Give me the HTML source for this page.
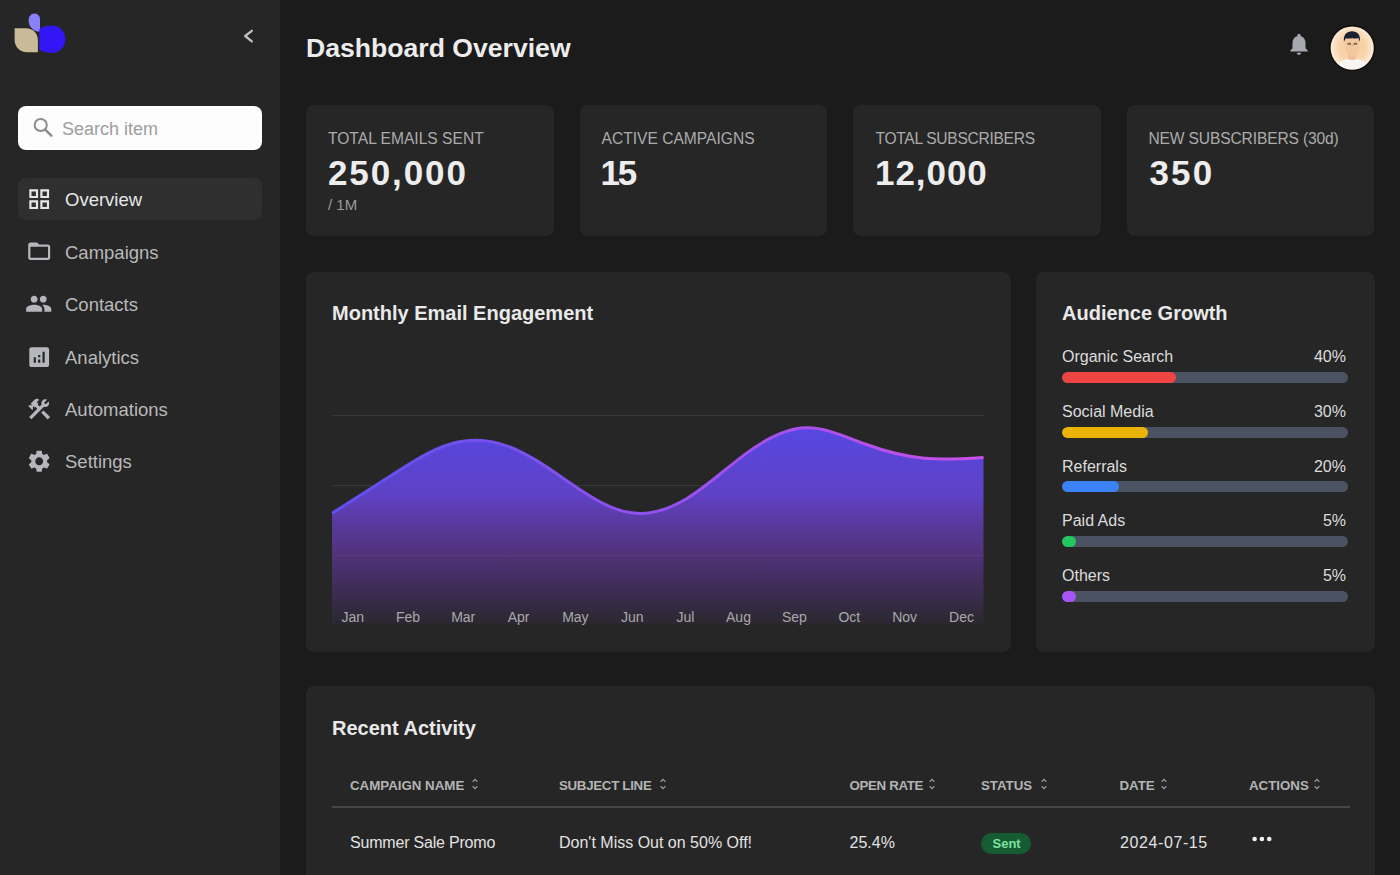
<!DOCTYPE html>
<html><head><meta charset="utf-8">
<style>
*{margin:0;padding:0;box-sizing:border-box}
html,body{width:1400px;height:875px;overflow:hidden;background:#1b1b1b;font-family:"Liberation Sans",sans-serif}
.abs{position:absolute}
.t{position:absolute;white-space:nowrap;line-height:1}
#side{position:absolute;left:0;top:0;width:280px;height:875px;background:#262626}
.card{position:absolute;background:#262626;border-radius:8px}
.search{position:absolute;left:18px;top:105.5px;width:244px;height:44.5px;background:#fdfdfd;border-radius:8px}
.nav-act{position:absolute;left:18px;top:177.5px;width:244px;height:42px;background:#2f2f2f;border-radius:8px}
.nav{font-size:18.5px;color:#b9b9b9}
.ico{position:absolute;fill:#b5b7bd}
.lbl{font-size:15.6px;color:#ababab;letter-spacing:0}
.val{font-size:35px;font-weight:700;color:#ededed}
.h2{font-size:20px;font-weight:700;color:#e9e9e9}
.ag{font-size:16px;color:#dcdcdc}
.track{position:absolute;left:1062px;width:286px;height:11px;border-radius:6px;background:#4b5261;overflow:hidden}
.track i{position:absolute;left:0;top:0;bottom:0;border-radius:6px}
.mon{font-size:14px;color:#a9a9a9;text-align:center;width:50px}
.th{font-size:13.3px;font-weight:700;color:#b4b4b4}
.td{font-size:16px;color:#e2e2e2}
.sort{position:absolute;fill:#9c9c9c}
</style></head><body>
<div id="side"></div>
<!-- logo -->
<svg class="abs" style="left:0;top:0" width="80" height="70" viewBox="0 0 80 70">
  <path d="M34.5,13.6 C31,13.6 28.6,16.5 28.6,20.5 C28.6,26.5 33,31.7 40,31.7 L40,19.5 C40,16 37.8,13.6 34.5,13.6Z" fill="#8a80f8"/>
  <path d="M14.6,28.3 L26,28.3 C33,28.3 37.9,33.5 37.9,40.5 L37.9,52.3 L27,52.3 C20,52.3 14.6,47 14.6,40Z" fill="#c9bb98"/>
  <path d="M39.3,29.5 C42,26.8 46.5,25.6 51.5,25.6 C59.5,25.6 65.3,31.5 65.3,39.3 C65.3,47 59.5,53 51.5,53 C46.5,53 42,51.8 39.3,49.5Z" fill="#3216f6"/>
</svg>
<svg class="abs" style="left:240px;top:26px" width="20" height="20" viewBox="0 0 20 20"><path d="M11.8,4.8 L5.2,10 L11.8,15.4" fill="none" stroke="#c0c0c0" stroke-width="2.3" stroke-linecap="round" stroke-linejoin="round"/></svg>

<div class="search"></div>
<svg class="abs" style="left:30px;top:114px" width="26" height="26" viewBox="30 114 26 26"><circle cx="40.7" cy="125" r="6.1" fill="none" stroke="#8c8c8c" stroke-width="2"/><path d="M45.3,129.6 L51.3,135.6" stroke="#8c8c8c" stroke-width="2.5" stroke-linecap="round"/></svg>
<div class="t" style="left:62px;top:119.7px;font-size:18px;color:#9d9d9d">Search item</div>

<div class="nav-act"></div>
<svg class="ico" style="left:25.8px;top:185.6px" width="26.4" height="26.4" viewBox="0 0 24 24"><path fill="#e6e6e6" d="M3 3v8h8V3H3zm6 6H5V5h4v4zm-6 4v8h8v-8H3zm6 6H5v-4h4v4zm4-16v8h8V3h-8zm6 6h-4V5h4v4zm-6 4v8h8v-8h-8zm6 6h-4v-4h4v4z"/></svg>
<div class="t nav" style="left:65px;top:191px;color:#e6e6e6">Overview</div>
<svg class="ico" style="left:25.8px;top:238.2px" width="26.4" height="26.4" viewBox="0 0 24 24"><path d="M20 6h-8l-2-2H4c-1.1 0-1.99.9-1.99 2L2 18c0 1.1.9 2 2 2h16c1.1 0 2-.9 2-2V8c0-1.1-.9-2-2-2zm0 12H4V8h16v10z"/></svg>
<div class="t nav" style="left:65px;top:243.5px">Campaigns</div>
<svg class="ico" style="left:25.4px;top:289.8px" width="27.4" height="27.4" viewBox="0 0 24 24"><path d="M16 11c1.66 0 2.99-1.34 2.99-3S17.66 5 16 5c-1.66 0-3 1.34-3 3s1.34 3 3 3zm-8 0c1.66 0 2.99-1.34 2.99-3S9.66 5 8 5C6.34 5 5 6.34 5 8s1.34 3 3 3zm0 2c-2.33 0-7 1.17-7 3.5V19h14v-2.5c0-2.33-4.67-3.5-7-3.5zm8 0c-.29 0-.62.02-.97.05 1.16.84 1.97 1.97 1.97 3.45V19h6v-2.5c0-2.33-4.67-3.5-7-3.5z"/></svg>
<div class="t nav" style="left:65px;top:296px">Contacts</div>
<svg class="ico" style="left:25.8px;top:343.5px" width="26.4" height="26.4" viewBox="0 0 24 24"><path d="M19 3H5c-1.1 0-2 .9-2 2v14c0 1.1.9 2 2 2h14c1.1 0 2-.9 2-2V5c0-1.1-.9-2-2-2zM9 17H7v-5h2v5zm4 0h-2v-3h2v3zm0-5h-2v-2h2v2zm4 5h-2V7h2v10z"/></svg>
<div class="t nav" style="left:65px;top:348.5px">Analytics</div>
<svg class="ico" style="left:25.8px;top:395.7px" width="26.4" height="26.4" viewBox="0 0 24 24"><path d="M13.78 15.3l6 6 2.11-2.16-6-6zM17.5 10c1.93 0 3.5-1.57 3.5-3.5 0-.58-.16-1.12-.41-1.6l-2.7 2.7-1.49-1.49 2.7-2.7c-.48-.25-1.020-.41-1.6-.41C15.57 3 14 4.57 14 6.5c0 .41.08.8.21 1.16l-1.85 1.85-1.78-1.78.71-.71-1.41-1.41L12 3.49c-1.17-1.17-3.07-1.17-4.240 0L4.22 7.03l1.41 1.41H2.81l-.71.71 3.54 3.54.71-.71V9.15l1.41 1.41.71-.71 1.78 1.78-7.41 7.41 2.12 2.12L16.34 9.79c.36.13.75.21 1.16.21z"/></svg>
<div class="t nav" style="left:65px;top:401px">Automations</div>
<svg class="ico" style="left:25.8px;top:447.9px" width="26.4" height="26.4" viewBox="0 0 24 24"><path d="M19.14 12.94c.04-.3.06-.61.06-.94 0-.32-.02-.64-.07-.94l2.030-1.58c.18-.14.23-.41.12-.61l-1.92-3.32c-.12-.22-.37-.29-.59-.22l-2.39.96c-.5-.38-1.03-.7-1.62-.94l-.36-2.54c-.04-.24-.24-.41-.48-.41h-3.84c-.24 0-.43.17-.47.41l-.36 2.54c-.59.24-1.13.57-1.62.94l-2.39-.96c-.22-.08-.47 0-.59.22L2.74 8.87c-.12.21-.08.47.12.61l2.03 1.58c-.05.3-.09.63-.09.94s.02.64.07.94l-2.03 1.58c-.18.14-.23.41-.12.61l1.92 3.32c.12.22.37.29.59.22l2.39-.96c.5.38 1.03.7 1.62.94l.36 2.54c.05.24.24.41.48.41h3.84c.24 0 .44-.17.47-.41l.36-2.54c.59-.24 1.13-.56 1.62-.94l2.39.96c.22.08.47 0 .59-.22l1.92-3.32c.12-.22.07-.47-.12-.61l-2.01-1.58zM12 15.6c-1.98 0-3.6-1.62-3.6-3.6s1.62-3.6 3.6-3.6 3.6 1.62 3.6 3.6-1.62 3.6-3.6 3.6z"/></svg>
<div class="t nav" style="left:65px;top:453.2px">Settings</div>

<!-- header -->
<div class="t" style="left:306px;top:34.6px;font-size:26.6px;font-weight:700;color:#ececec">Dashboard Overview</div>
<svg class="abs" style="left:1286.3px;top:31.4px" width="26" height="26" viewBox="0 0 24 24"><path fill="#a6a9b0" d="M12 22c1.1 0 2-.9 2-2h-4c0 1.1.89 2 2 2zm6-6v-5c0-3.07-1.64-5.64-4.5-6.32V4c0-.83-.67-1.5-1.5-1.5s-1.5.67-1.5 1.5v.68C7.63 5.36 6 7.92 6 11v5l-2 2v1h16v-1l-2-2z"/></svg>
<svg class="abs" style="left:1328px;top:24px" width="48" height="48" viewBox="0 0 48 48">
  <defs>
    <radialGradient id="av" cx="50%" cy="48%" r="52%"><stop offset="0" stop-color="#f6c99c"/><stop offset="0.6" stop-color="#f8d4ac"/><stop offset="1" stop-color="#fdeedb"/></radialGradient>
    <clipPath id="avc"><circle cx="24.2" cy="24" r="21.6"/></clipPath>
  </defs>
  <circle cx="24.2" cy="24" r="23" fill="#0d0d0d"/>
  <circle cx="24.2" cy="24" r="21.6" fill="url(#av)"/>
  <g clip-path="url(#avc)">
    <path d="M7,48 C8,39 15,34.5 24.2,34.5 C33.4,34.5 40.5,39 41.5,48Z" fill="#f7f6f2"/>
    <path d="M20.3,27 L28.1,27 L28.5,35 C26.5,36.5 22,36.5 20,35Z" fill="#f0c29b"/>
    <path d="M17,18 C17,27 20,31.5 24.2,31.5 C28.4,31.5 31.4,27 31.4,18 C31.4,14.5 28.5,12 24.2,12 C19.9,12 17,14.5 17,18Z" fill="#f3c8a0"/>
    <path d="M15.9,17.8 C15.3,10.5 18.8,7.2 24,7.2 C29.4,7.2 32.6,10.5 32,17.8 C31.3,16.4 31,15.4 30.5,14.3 C28.5,14.6 25,14.4 24,14.2 C22,14.6 19.6,14.6 17.6,14.4 C17.2,15.4 16.6,16.5 15.9,17.8Z" fill="#1b2133"/>
    <rect x="19.4" y="18.8" width="3.6" height="2" rx="0.6" fill="#5e4536" opacity="0.75"/>
    <rect x="25.6" y="18.8" width="3.6" height="2" rx="0.6" fill="#5e4536" opacity="0.75"/>
    <path d="M23,21 L25.5,21" stroke="#8a6a55" stroke-width="0.6" opacity="0.6"/>
  </g>
</svg>

<!-- stat cards -->
<div class="card" style="left:306px;top:105px;width:247.5px;height:131px"></div>
<div class="card" style="left:579.5px;top:105px;width:247.5px;height:131px"></div>
<div class="card" style="left:853px;top:105px;width:247.5px;height:131px"></div>
<div class="card" style="left:1126.5px;top:105px;width:247.5px;height:131px"></div>
<div class="t lbl" style="left:328px;top:131px">TOTAL EMAILS SENT</div>
<div class="t lbl" style="left:601.5px;top:131px">ACTIVE CAMPAIGNS</div>
<div class="t lbl" style="left:875.5px;top:131px;letter-spacing:-0.3px">TOTAL SUBSCRIBERS</div>
<div class="t lbl" style="left:1148.5px;top:131px;letter-spacing:-0.15px">NEW SUBSCRIBERS (30d)</div>
<div class="t val" style="left:328px;top:155.4px;letter-spacing:1.9px">250,000</div>
<div class="t val" style="left:600.5px;top:155.4px;letter-spacing:-2.2px">15</div>
<div class="t val" style="left:875px;top:155.4px;letter-spacing:0.95px">12,000</div>
<div class="t val" style="left:1149.5px;top:155.4px;letter-spacing:2.1px">350</div>
<div class="t" style="left:328px;top:197.3px;font-size:15px;color:#9b9b9b">/ 1M</div>

<!-- chart card -->
<div class="card" style="left:306px;top:272px;width:704.5px;height:379.5px"></div>
<div class="t h2" style="left:332px;top:303px">Monthly Email Engagement</div>
<svg class="abs" style="left:0;top:0" width="1400" height="875" viewBox="0 0 1400 875">
  <defs>
    <linearGradient id="fillg" x1="0" y1="425" x2="0" y2="625" gradientUnits="userSpaceOnUse">
      <stop offset="0" stop-color="#5647e4" stop-opacity="1"/>
      <stop offset="0.35" stop-color="#6042c8" stop-opacity="0.98"/>
      <stop offset="0.65" stop-color="#6a3aac" stop-opacity="0.62"/>
      <stop offset="1" stop-color="#6a3aac" stop-opacity="0.06"/>
    </linearGradient>
    <linearGradient id="strk" x1="332" y1="0" x2="984" y2="0" gradientUnits="userSpaceOnUse">
      <stop offset="0" stop-color="#5d50ee"/>
      <stop offset="1" stop-color="#c850ea"/>
    </linearGradient>
  </defs>
  <line x1="332" y1="415.5" x2="984" y2="415.5" stroke="#ffffff" stroke-opacity="0.085" stroke-width="1"/>
  <line x1="332" y1="485.5" x2="984" y2="485.5" stroke="#ffffff" stroke-opacity="0.085" stroke-width="1"/>
  <line x1="332" y1="555.5" x2="984" y2="555.5" stroke="#ffffff" stroke-opacity="0.085" stroke-width="1"/>
  <path d="M332.0,513.3 C351.7,500.8 371.5,488.2 391.2,475.5 C411.0,462.8 430.7,449.9 450.5,444.0 C470.2,438.2 489.9,439.3 509.7,446.9 C529.4,454.5 549.2,468.6 568.9,482.2 C588.7,495.7 608.4,508.7 628.1,512.3 C647.9,516.0 667.6,510.3 687.4,498.2 C707.1,486.1 726.8,467.6 746.6,453.1 C766.3,438.7 786.1,428.3 805.8,427.8 C825.6,427.3 845.3,436.8 865.0,444.0 C884.8,451.3 904.5,456.3 924.3,458.2 C944.0,460.0 963.8,458.7 983.5,457.4 L983.5,624 L332,624Z" fill="url(#fillg)"/>
  <path d="M332.0,513.3 C351.7,500.8 371.5,488.2 391.2,475.5 C411.0,462.8 430.7,449.9 450.5,444.0 C470.2,438.2 489.9,439.3 509.7,446.9 C529.4,454.5 549.2,468.6 568.9,482.2 C588.7,495.7 608.4,508.7 628.1,512.3 C647.9,516.0 667.6,510.3 687.4,498.2 C707.1,486.1 726.8,467.6 746.6,453.1 C766.3,438.7 786.1,428.3 805.8,427.8 C825.6,427.3 845.3,436.8 865.0,444.0 C884.8,451.3 904.5,456.3 924.3,458.2 C944.0,460.0 963.8,458.7 983.5,457.4" fill="none" stroke="url(#strk)" stroke-width="3"/>
</svg>
<div class="t mon" style="left:327.7px;top:609.5px">Jan</div>
<div class="t mon" style="left:383px;top:609.5px">Feb</div>
<div class="t mon" style="left:438.2px;top:609.5px">Mar</div>
<div class="t mon" style="left:493.6px;top:609.5px">Apr</div>
<div class="t mon" style="left:550.4px;top:609.5px">May</div>
<div class="t mon" style="left:607.3px;top:609.5px">Jun</div>
<div class="t mon" style="left:660.5px;top:609.5px">Jul</div>
<div class="t mon" style="left:713.5px;top:609.5px">Aug</div>
<div class="t mon" style="left:769.4px;top:609.5px">Sep</div>
<div class="t mon" style="left:824.3px;top:609.5px">Oct</div>
<div class="t mon" style="left:879.6px;top:609.5px">Nov</div>
<div class="t mon" style="left:936.5px;top:609.5px">Dec</div>

<!-- audience card -->
<div class="card" style="left:1036px;top:272px;width:338.5px;height:379.5px"></div>
<div class="t h2" style="left:1062px;top:302.6px">Audience Growth</div>
<div class="t ag" style="left:1062px;top:349.1px">Organic Search</div><div class="t ag" style="left:1298px;top:349.1px;width:48px;text-align:right">40%</div>
<div class="track" style="top:372px"><i style="width:114px;background:#ef4444"></i></div>
<div class="t ag" style="left:1062px;top:403.8px">Social Media</div><div class="t ag" style="left:1298px;top:403.8px;width:48px;text-align:right">30%</div>
<div class="track" style="top:426.7px"><i style="width:86px;background:#eab308"></i></div>
<div class="t ag" style="left:1062px;top:458.5px">Referrals</div><div class="t ag" style="left:1298px;top:458.5px;width:48px;text-align:right">20%</div>
<div class="track" style="top:481.4px"><i style="width:57px;background:#3b82f6"></i></div>
<div class="t ag" style="left:1062px;top:513.2px">Paid Ads</div><div class="t ag" style="left:1298px;top:513.2px;width:48px;text-align:right">5%</div>
<div class="track" style="top:536.1px"><i style="width:14px;background:#22c55e"></i></div>
<div class="t ag" style="left:1062px;top:567.9px">Others</div><div class="t ag" style="left:1298px;top:567.9px;width:48px;text-align:right">5%</div>
<div class="track" style="top:590.8px"><i style="width:14px;background:#a855f7"></i></div>

<!-- recent activity -->
<div class="card" style="left:306px;top:686px;width:1068.5px;height:240px"></div>
<div class="t h2" style="left:332px;top:718.2px">Recent Activity</div>
<div class="t th" style="left:350px;top:779px">CAMPAIGN NAME</div>
<div class="t th" style="left:559px;top:779px;letter-spacing:-0.3px">SUBJECT LINE</div>
<div class="t th" style="left:849.5px;top:779px;letter-spacing:-0.35px">OPEN RATE</div>
<div class="t th" style="left:981px;top:779px">STATUS</div>
<div class="t th" style="left:1119.5px;top:779px">DATE</div>
<div class="t th" style="left:1249px;top:779px">ACTIONS</div>
<svg class="sort" style="left:470.5px;top:777.5px" width="8" height="12" viewBox="6 2 12 20"><path d="M12 5.83L15.17 9l1.41-1.41L12 3 7.41 7.59 8.83 9 12 5.83zm0 12.34L8.83 15l-1.41 1.41L12 21l4.59-4.59L15.17 15 12 18.17z"/></svg>
<svg class="sort" style="left:659px;top:777.5px" width="8" height="12" viewBox="6 2 12 20"><path d="M12 5.83L15.17 9l1.41-1.41L12 3 7.41 7.59 8.83 9 12 5.83zm0 12.34L8.83 15l-1.41 1.41L12 21l4.59-4.59L15.17 15 12 18.17z"/></svg>
<svg class="sort" style="left:928px;top:777.5px" width="8" height="12" viewBox="6 2 12 20"><path d="M12 5.83L15.17 9l1.41-1.41L12 3 7.41 7.59 8.83 9 12 5.83zm0 12.34L8.83 15l-1.41 1.41L12 21l4.59-4.59L15.17 15 12 18.17z"/></svg>
<svg class="sort" style="left:1039.5px;top:777.5px" width="8" height="12" viewBox="6 2 12 20"><path d="M12 5.83L15.17 9l1.41-1.41L12 3 7.41 7.59 8.83 9 12 5.83zm0 12.34L8.83 15l-1.41 1.41L12 21l4.59-4.59L15.17 15 12 18.17z"/></svg>
<svg class="sort" style="left:1159.5px;top:777.5px" width="8" height="12" viewBox="6 2 12 20"><path d="M12 5.83L15.17 9l1.41-1.41L12 3 7.41 7.59 8.83 9 12 5.83zm0 12.34L8.83 15l-1.41 1.41L12 21l4.59-4.59L15.17 15 12 18.17z"/></svg>
<svg class="sort" style="left:1313px;top:777.5px" width="8" height="12" viewBox="6 2 12 20"><path d="M12 5.83L15.17 9l1.41-1.41L12 3 7.41 7.59 8.83 9 12 5.83zm0 12.34L8.83 15l-1.41 1.41L12 21l4.59-4.59L15.17 15 12 18.17z"/></svg>
<div class="abs" style="left:332px;top:806px;width:1017.5px;height:2px;background:#464646"></div>
<div class="t td" style="left:350px;top:834.5px;letter-spacing:-0.2px">Summer Sale Promo</div>
<div class="t td" style="left:559px;top:834.5px">Don't Miss Out on 50% Off!</div>
<div class="t td" style="left:849.5px;top:834.5px">25.4%</div>
<div class="abs" style="left:981px;top:832.5px;width:50px;height:21px;border-radius:10.5px;background:#165c33"></div>
<div class="t" style="left:992.5px;top:836.8px;font-size:13px;font-weight:700;color:#7fe0a0">Sent</div>
<div class="t td" style="left:1120px;top:834.5px;letter-spacing:0.6px">2024-07-15</div>
<svg class="abs" style="left:1250px;top:834px" width="24" height="10" viewBox="0 0 24 10"><circle cx="4.6" cy="5" r="2.3" fill="#f0f0f0"/><circle cx="11.9" cy="5" r="2.3" fill="#f0f0f0"/><circle cx="19.2" cy="5" r="2.3" fill="#f0f0f0"/></svg>
</body></html>
